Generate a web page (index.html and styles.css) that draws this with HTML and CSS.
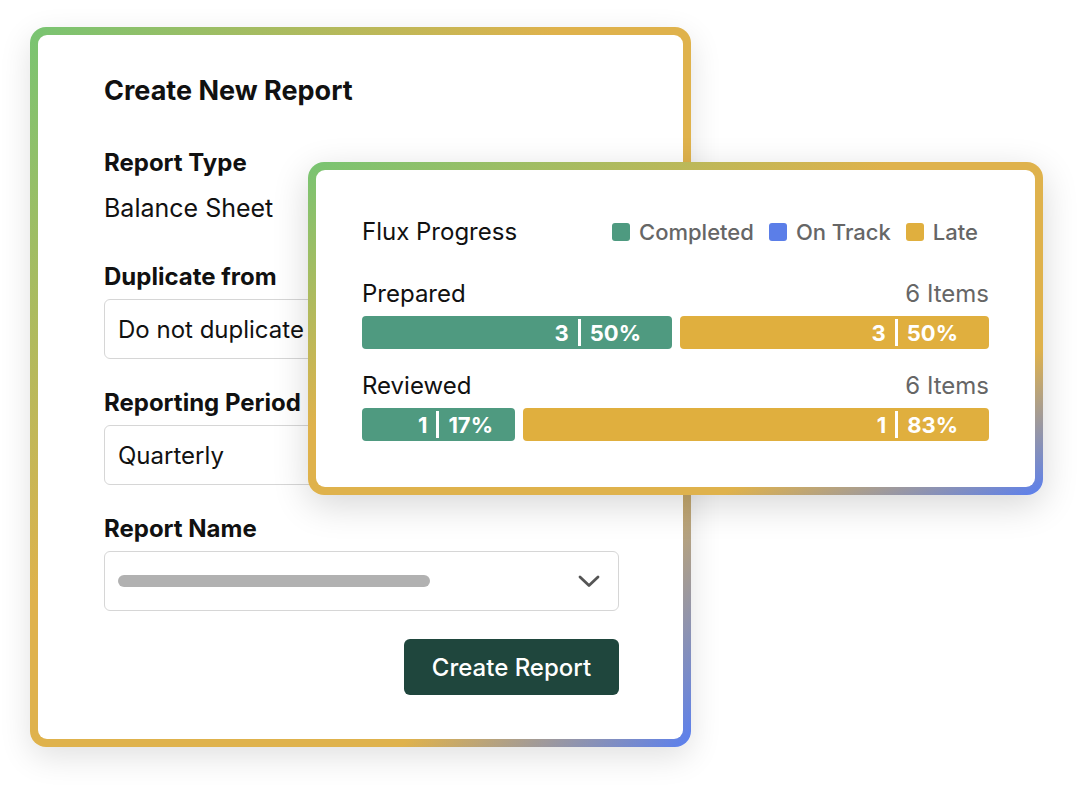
FILE: index.html
```html
<!DOCTYPE html>
<html lang="en">
<head>
  <meta charset="UTF-8">
  <meta name="viewport" content="width=device-width, initial-scale=1.0">
  <title>Create New Report</title>
  <link rel="stylesheet" href="styles.css">
</head>
<body>
  <div class="scene">
    <div class="card card-form">
      <div class="card-inner form-inner">
        <h1>Create New Report</h1>

        <div class="field static">
          <div class="label">Report Type</div>
          <div class="value">Balance Sheet</div>
        </div>

        <div class="field">
          <div class="label">Duplicate from</div>
          <div class="input">Do not duplicate</div>
        </div>

        <div class="field">
          <div class="label">Reporting Period</div>
          <div class="input">Quarterly</div>
        </div>

        <div class="field">
          <div class="label">Report Name</div>
          <div class="input select">
            <span class="placeholder"></span>
            <svg class="chevron" width="22" height="13" viewBox="0 0 22 13">
              <path d="M2 2 L11 10.5 L20 2" fill="none" stroke="#555" stroke-width="2.8" stroke-linecap="round" stroke-linejoin="round"/>
            </svg>
          </div>
        </div>

        <button type="button" class="btn-create">Create Report</button>
      </div>
    </div>

    <div class="card card-flux">
      <div class="card-inner flux-inner">
        <div class="flux-head">
          <div class="flux-title">Flux Progress</div>
          <div class="legend">
            <span class="legend-item"><span class="swatch completed"></span>Completed</span>
            <span class="legend-item"><span class="swatch on-track"></span>On Track</span>
            <span class="legend-item"><span class="swatch late"></span>Late</span>
          </div>
        </div>

        <div class="flux-row">
          <div class="row-head">
            <span>Prepared</span>
            <span class="count">6 Items</span>
          </div>
          <div class="bars">
            <div class="bar completed" style="width: 310px">3<span class="sep"></span>50%</div>
            <div class="bar late grow">3<span class="sep"></span>50%</div>
          </div>
        </div>

        <div class="flux-row">
          <div class="row-head">
            <span>Reviewed</span>
            <span class="count">6 Items</span>
          </div>
          <div class="bars">
            <div class="bar completed narrow" style="width: 153px">1<span class="sep"></span>17%</div>
            <div class="bar late grow">1<span class="sep"></span>83%</div>
          </div>
        </div>
      </div>
    </div>
  </div>
</body>
</html>
```

FILE: styles.css
```css
body {
  margin: 0;
  background: #fff;
  font-family: Inter, "Noto Sans", sans-serif;
  color: #111;
}

.scene {
  position: relative;
  width: 1080px;
  height: 788px;
  padding: 27px 0 0 30px;
  box-sizing: border-box;
}

/* gradient frame around both cards */
.card {
  box-sizing: border-box;
  padding: 8px;
  border-radius: 16px;
  background: linear-gradient(to bottom right, #78c472 0%, #dfb24c 40%, #dfb24c 78%, #5a7ff0 100%);
  box-shadow: 0 10px 32px rgba(0, 0, 0, 0.12);
}

.card-inner {
  background: #fff;
  border-radius: 9px;
  height: 100%;
  box-sizing: border-box;
}

/* form card */
.card-form {
  width: 661px;
  height: 720px;
}

.form-inner {
  display: flex;
  flex-direction: column;
  padding: 39px 64px 0 66px;
}

h1 {
  margin: 0;
  font-size: 27px;
  line-height: 34px;
  font-weight: 700;
}

.field {
  display: flex;
  flex-direction: column;
  margin-top: 29px;
}

.field.static {
  margin-top: 40px;
}

.label {
  font-size: 24px;
  line-height: 30px;
  font-weight: 700;
}

.value {
  margin-top: 15px;
  margin-bottom: 10px;
  font-size: 25px;
  line-height: 30px;
}

.input {
  margin-top: 7px;
  height: 60px;
  box-sizing: border-box;
  border: 1px solid #d6d6d6;
  border-radius: 6px;
  padding: 0 13px;
  display: flex;
  align-items: center;
  font-size: 24px;
}

.select {
  justify-content: space-between;
  padding-right: 18px;
}

.placeholder {
  width: 312px;
  height: 12px;
  border-radius: 6px;
  background: #b1b1b1;
}

.btn-create {
  align-self: flex-end;
  margin-top: 28px;
  width: 215px;
  height: 56px;
  border: none;
  border-radius: 6px;
  background: #1f463d;
  color: #fff;
  font-family: inherit;
  font-size: 24px;
  font-weight: 500;
}

/* flux progress card */
.card-flux {
  position: absolute;
  left: 308px;
  top: 162px;
  width: 735px;
  height: 333px;
  box-shadow: 0 10px 36px rgba(0, 0, 0, 0.16);
}

.flux-inner {
  padding: 47px 46px 0 46px;
}

.flux-head {
  display: flex;
  justify-content: space-between;
  align-items: center;
  font-size: 24px;
  line-height: 30px;
}

.legend {
  display: flex;
  gap: 15px;
  margin-right: 11px;
  font-size: 22px;
}

.legend-item {
  display: flex;
  align-items: center;
  gap: 9px;
  color: #666;
  font-weight: 500;
}

.swatch {
  width: 18px;
  height: 18px;
  border-radius: 3px;
}

.swatch.completed { background: #4e9a80; }
.swatch.on-track { background: #5b7ee8; }
.swatch.late { background: #e0af3e; }

.flux-row {
  margin-top: 32px;
}

.flux-row + .flux-row {
  margin-top: 22px;
}

.row-head {
  display: flex;
  justify-content: space-between;
  font-size: 24px;
  line-height: 30px;
}

.count {
  color: #666;
}

.bars {
  display: flex;
  gap: 8px;
  margin-top: 7px;
}

.bar {
  height: 33px;
  border-radius: 4px;
  display: flex;
  justify-content: flex-end;
  align-items: center;
  padding-right: 31px;
  box-sizing: border-box;
  color: #fff;
  font-size: 22px;
  font-weight: 700;
}

.bar.narrow {
  padding-right: 22px;
}

.bar.grow {
  flex: 1;
}

.bar.completed { background: #4f9a80; }
.bar.late { background: #e0af3e; }

.sep {
  width: 3px;
  height: 27px;
  margin: 0 9px;
  background: #fff;
}
```
